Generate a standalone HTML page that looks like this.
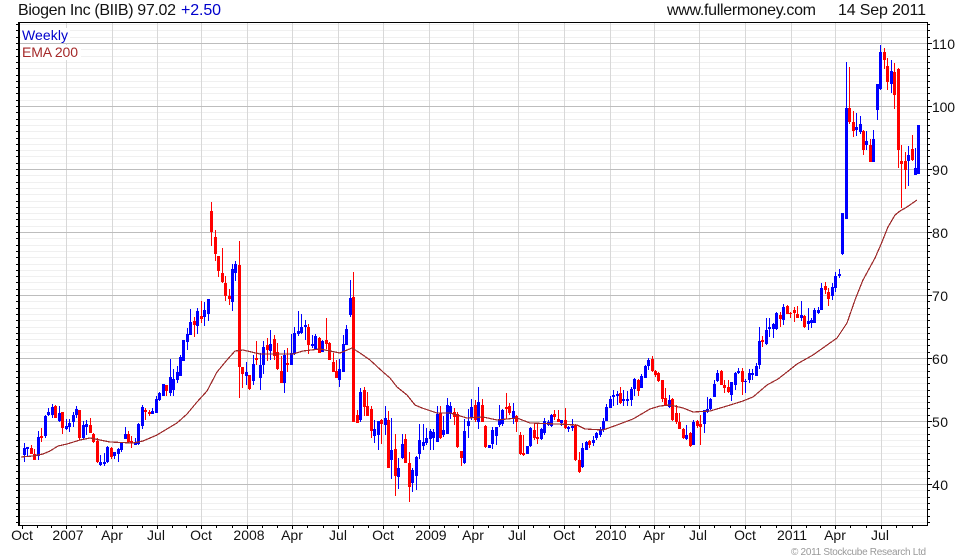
<!DOCTYPE html>
<html><head><meta charset="utf-8"><title>Biogen Inc (BIIB)</title>
<style>html,body{margin:0;padding:0;background:#fff;width:980px;height:560px;overflow:hidden}svg{display:block}text{font-family:"Liberation Sans",Arial,sans-serif}</style></head>
<body>
<svg width="980" height="560" viewBox="0 0 980 560" xmlns="http://www.w3.org/2000/svg">
<defs>
<clipPath id="c"><rect x="0" y="23" width="980" height="503"/></clipPath>
<g id="mi"><path d="M20 6.5H927M20 13.5H927M20 19.5H927M20 25.5H927M20 32.5H927M20 38.5H927M20 44.5H927M20 50.5H927M20 57.5H927" stroke="#f0f0f0" fill="none"/></g>
<g id="ma"><path d="M20 .5H927" stroke="#bdbdbd" fill="none"/></g>
<g id="tk"><path d="M16 .5H18M16 6.5H18M16 13.5H18M16 19.5H18M16 25.5H18M16 32.5H18M16 38.5H18M16 44.5H18M16 50.5H18M16 57.5H18M928 .5H932M928 6.5H930M928 13.5H930M928 19.5H930M928 25.5H930M928 32.5H930M928 38.5H930M928 44.5H930M928 50.5H930M928 57.5H930" stroke="#000" fill="none"/></g>
</defs>
<g clip-path="url(#c)">
<use href="#mi" y="-20"/><use href="#mi" y="43"/><use href="#mi" y="106"/><use href="#mi" y="169"/><use href="#mi" y="232"/><use href="#mi" y="295"/><use href="#mi" y="358"/><use href="#mi" y="421"/><use href="#mi" y="484"/>
</g>
<path d="M66.5 23V525M112.5 23V525M157.5 23V525M201.5 23V525M247.5 23V525M292.5 23V525M338.5 23V525M383.5 23V525M429.5 23V525M473.5 23V525M518.5 23V525M564.5 23V525M610.5 23V525M654.5 23V525M699.5 23V525M745.5 23V525M791.5 23V525M835.5 23V525M881.5 23V525" stroke="#d8d8d8" stroke-width="1" fill="none"/>
<use href="#ma" y="43"/><use href="#ma" y="106"/><use href="#ma" y="169"/><use href="#ma" y="232"/><use href="#ma" y="295"/><use href="#ma" y="358"/><use href="#ma" y="421"/><use href="#ma" y="484"/>
<g clip-path="url(#c)">
<use href="#tk" y="-20"/><use href="#tk" y="43"/><use href="#tk" y="106"/><use href="#tk" y="169"/><use href="#tk" y="232"/><use href="#tk" y="295"/><use href="#tk" y="358"/><use href="#tk" y="421"/><use href="#tk" y="484"/>
</g>
<!-- blue wicks -->
<path fill="none" stroke="#0000ff" stroke-width="1" d="M24.5 443V462M27.5 447V456M38.5 431V460M45.5 415V438M48.5 408V416M52.5 404V418M59.5 406V422M66.5 419V430M69.5 419V432M73.5 412V427M76.5 406V418M83.5 421V439M86.5 420V435M100.5 455V466M104.5 453V466M107.5 446V463M114.5 452V459M118.5 448V462M121.5 442V452M125.5 427V439M135.5 438V445M138.5 423V445M142.5 405V429M152.5 408V414M156.5 396V413M159.5 392V401M163.5 384V396M170.5 359V396M173.5 369V396M177.5 366V383M180.5 355V376M183.5 340V361M187.5 328V350M190.5 309V335M197.5 308V334M204.5 302V326M208.5 299V321M232.5 264V311M235.5 261V281M246.5 362V385M253.5 355V385M260.5 353V390M263.5 341V374M270.5 330V360M284.5 350V393M291.5 334V365M294.5 327V355M298.5 311V336M301.5 314V334M305.5 320V340M312.5 335V348M315.5 334V350M322.5 340V352M339.5 359V387M343.5 335V372M346.5 325V345M350.5 280V317M360.5 388V422M374.5 420V443M378.5 421V450M385.5 406V435M391.5 418V479M398.5 458V489M402.5 434V459M412.5 468V492M416.5 456V490M419.5 424V459M423.5 424V450M426.5 428V445M430.5 429V450M433.5 429V450M437.5 406V442M443.5 416V437M447.5 398V434M450.5 402V419M464.5 419V464M468.5 409V438M471.5 399V420M478.5 387V429M489.5 445V448M492.5 427V449M496.5 427V445M499.5 405V427M502.5 409V426M513.5 403V424M527.5 446V454M530.5 427V447M541.5 428V440M544.5 418V435M548.5 420V426M551.5 414V427M561.5 420V426M568.5 426V432M572.5 419V431M582.5 443V468M586.5 441V450M593.5 436V446M596.5 432V440M600.5 427V437M603.5 418V432M606.5 404V421M610.5 396V408M613.5 390V406M617.5 391V405M623.5 390V406M627.5 391V406M631.5 387V406M634.5 378V396M641.5 374V388M645.5 365V378M648.5 358V370M669.5 395V408M686.5 425V440M693.5 420V445M704.5 410V433M707.5 397V413M710.5 398V410M714.5 380V397M717.5 370V382M731.5 382V401M735.5 372V390M738.5 368V374M745.5 379V393M749.5 369V383M752.5 369V380M756.5 363V376M759.5 327V369M766.5 318V345M769.5 318V337M773.5 323V338M776.5 312V330M783.5 304V325M801.5 301V321M808.5 308V330M811.5 318V328M814.5 308V323M818.5 307V314M821.5 283V310M832.5 283V300M835.5 272V292M839.5 269V278M842.5 213V255M846.5 62V219M856.5 113V136M860.5 116V134M866.5 131V150M873.5 130V162M877.5 84V120M880.5 45V90M891.5 60V93M908.5 146V186M915.5 148V175M918.5 125V174"/>
<!-- blue bodies -->
<path fill="none" stroke="#0000ff" stroke-width="3" d="M24.5 448V455M27.5 447V449M38.5 437V456M45.5 416V436M48.5 412V415M52.5 407V415M59.5 413V421M66.5 426V429M69.5 423V427M73.5 415V422M76.5 409V415M83.5 425V438M86.5 424V427M100.5 462V465M104.5 462V464M107.5 447V462M114.5 452V456M118.5 449V454M121.5 442V450M125.5 434V439M135.5 443V445M138.5 424V444M142.5 407V426M152.5 411V414M156.5 399V413M159.5 393V400M163.5 384V396M170.5 377V393M173.5 379V390M177.5 372V380M180.5 357V376M183.5 340V361M187.5 334V342M190.5 322V335M197.5 311V326M204.5 310V317M208.5 299V314M232.5 269V302M235.5 264V273M246.5 372V376M253.5 364V381M260.5 365V378M263.5 347V365M270.5 344V351M284.5 355V383M291.5 353V365M294.5 333V354M298.5 331V334M301.5 327V333M305.5 325V327M312.5 344V346M315.5 336V350M322.5 341V352M339.5 369V380M343.5 344V372M346.5 329V345M350.5 298V315M360.5 392V420M374.5 429V436M378.5 421V435M385.5 418V425M391.5 450V460M398.5 468V477M402.5 444V458M412.5 470V483M416.5 457V476M419.5 440V454M423.5 442V446M426.5 438V443M430.5 431V439M433.5 432V438M437.5 414V442M443.5 430V435M447.5 405V434M450.5 406V414M464.5 431V463M468.5 421V426M471.5 407V418M478.5 402V422M489.5 445V448M492.5 430V444M496.5 427V436M499.5 419V425M502.5 410V424M513.5 411V418M527.5 446V454M530.5 428V446M541.5 429V439M544.5 421V433M548.5 422V425M551.5 415V426M561.5 420V423M568.5 427V429M572.5 426V428M582.5 448V467M586.5 442V450M593.5 440V443M596.5 433V438M600.5 429V435M603.5 421V430M606.5 407V421M610.5 399V408M613.5 395V397M617.5 394V396M623.5 399V401M627.5 399V401M631.5 389V400M634.5 379V389M641.5 376V388M645.5 366V378M648.5 360V366M669.5 400V407M686.5 435V439M693.5 422V445M704.5 410V424M707.5 409V412M710.5 399V409M714.5 384V397M717.5 373V381M731.5 382V395M735.5 373V385M738.5 371V373M745.5 381V382M749.5 373V380M752.5 373V375M756.5 366V376M759.5 341V365M766.5 330V344M769.5 327V329M773.5 324V329M776.5 313V329M783.5 307V320M801.5 315V318M808.5 321V324M811.5 320V323M814.5 310V323M818.5 310V313M821.5 288V310M832.5 287V296M835.5 276V288M839.5 274V276M842.5 213V254M846.5 108V219M856.5 127V130M860.5 124V132M866.5 141V145M873.5 139V162M877.5 84V110M880.5 52V89M891.5 71V84M908.5 155V161M915.5 168V175M918.5 125V174"/>
<!-- red wicks -->
<path fill="none" stroke="#ff0000" stroke-width="1" d="M31.5 445V454M34.5 449V460M41.5 428V442M55.5 405V418M62.5 412V434M79.5 410V440M90.5 418V433M93.5 433V443M97.5 438V463M111.5 447V459M128.5 431V442M131.5 436V448M145.5 408V420M149.5 410V416M166.5 385V396M194.5 317V337M201.5 301V323M211.5 202V246M215.5 230V261M218.5 256V277M222.5 248V283M225.5 276V301M229.5 289V305M239.5 241V398M242.5 367V388M249.5 375V390M256.5 341V365M267.5 338V361M274.5 335V360M277.5 343V370M281.5 356V383M287.5 348V372M308.5 324V354M319.5 337V353M326.5 318V349M329.5 342V360M333.5 353V372M336.5 360V378M353.5 272V422M357.5 410V423M364.5 387V416M367.5 392V416M371.5 406V438M381.5 419V444M388.5 411V468M395.5 434V496M405.5 434V463M409.5 452V502M440.5 406V439M454.5 408V425M457.5 412V448M461.5 451V466M475.5 400V422M482.5 399V422M485.5 425V448M506.5 393V419M509.5 403V415M516.5 415V432M520.5 432V455M523.5 435V456M534.5 423V440M537.5 423V444M554.5 410V420M558.5 410V422M565.5 408V429M575.5 424V461M579.5 452V473M589.5 440V448M620.5 387V404M638.5 379V396M652.5 356V372M655.5 370V377M658.5 372V382M662.5 380V402M665.5 388V406M672.5 398V421M676.5 405V424M679.5 413V429M683.5 428V439M690.5 432V447M697.5 420V428M700.5 415V445M721.5 370V385M724.5 380V393M728.5 380V393M742.5 368V395M762.5 336V347M780.5 312V327M787.5 305V314M790.5 312V318M794.5 307V322M797.5 306V318M804.5 315V328M825.5 282V294M828.5 288V306M849.5 67V124M853.5 111V137M863.5 130V155M870.5 139V162M884.5 48V69M887.5 58V90M894.5 63V109M898.5 68V168M901.5 145V208M905.5 152V189M912.5 135V161"/>
<!-- red bodies -->
<path fill="none" stroke="#ff0000" stroke-width="3" d="M31.5 448V454M34.5 454V460M41.5 436V438M55.5 406V418M62.5 412V428M79.5 410V438M90.5 425V433M93.5 434V442M97.5 441V462M111.5 448V457M128.5 434V442M131.5 441V443M145.5 410V412M149.5 412V414M166.5 385V391M194.5 321V325M201.5 316V319M211.5 211V232M215.5 237V254M218.5 256V271M222.5 273V282M225.5 283V296M229.5 296V299M239.5 265V367M242.5 367V374M249.5 375V389M256.5 358V360M267.5 345V350M274.5 339V356M277.5 352V369M281.5 371V383M287.5 363V365M308.5 327V345M319.5 338V353M326.5 340V344M329.5 343V360M333.5 362V372M336.5 371V378M353.5 297V422M357.5 415V423M364.5 390V407M367.5 406V416M371.5 409V431M381.5 420V424M388.5 420V468M395.5 449V476M405.5 439V463M409.5 463V487M440.5 413V438M454.5 412V417M457.5 414V447M461.5 451V458M475.5 405V420M482.5 405V422M485.5 426V447M506.5 407V409M509.5 406V413M516.5 416V422M520.5 435V454M523.5 453V455M534.5 430V438M537.5 437V439M554.5 414V417M558.5 419V422M565.5 420V428M575.5 425V460M579.5 460V472M589.5 441V445M620.5 393V403M638.5 380V391M652.5 359V371M655.5 371V375M658.5 373V381M662.5 380V399M665.5 398V405M672.5 399V420M676.5 413V422M679.5 422V429M683.5 429V438M690.5 433V446M697.5 421V426M700.5 424V427M721.5 371V385M724.5 385V388M728.5 387V392M742.5 371V382M762.5 340V342M780.5 315V319M787.5 306V314M790.5 313V314M794.5 310V313M797.5 314V318M804.5 316V327M825.5 286V290M828.5 292V299M849.5 108V122M853.5 122V131M863.5 131V150M870.5 145V162M884.5 52V60M887.5 66V82M894.5 72V95M898.5 69V150M901.5 161V164M905.5 161V170M912.5 149V160"/>
<!-- EMA -->
<polyline fill="none" stroke="#9c2a2a" stroke-width="1.2" shape-rendering="crispEdges" points="21,457 33,456 43,454 50,451 58,446 67,444 80,440 90,438 100,440 110,442 133,443 143,441 157,435 167,429 177,423 187,414 197,402 207,391 217,372 227,360 235,351 243,350 260,354 280,354 293,354 303,351 320,349 340,353 352,348 360,353 370,360 383,372 390,378 397,387 407,395 415,405 422,408 437,413 450,413 467,418 483,417 497,420 517,418 530,423 557,424 577,425 585,429 603,430 617,425 633,419 650,409 660,406 670,405 683,408 693,412 710,411 727,406 743,401 753,397 767,385 778,379 787,372 797,364 813,355 837,338 847,323 855,300 863,280 875,258 882,242 888,227 895,215 900,211 907,207 917,200"/>
<!-- frame -->
<path d="M18 22.5H928M927.5 22V526M18 525.5H928" stroke="#000" fill="none"/>
<rect x="18" y="22" width="2" height="504" fill="#000"/>
<path d="M22.5 526V529M66.5 526V529M112.5 526V529M157.5 526V529M201.5 526V529M247.5 526V529M292.5 526V529M338.5 526V529M383.5 526V529M429.5 526V529M473.5 526V529M518.5 526V529M564.5 526V529M610.5 526V529M654.5 526V529M699.5 526V529M745.5 526V529M791.5 526V529M835.5 526V529M881.5 526V529M37.5 526V528M51.5 526V528M81.5 526V528M96.5 526V528M127.5 526V528M142.5 526V528M172.5 526V528M186.5 526V528M216.5 526V528M232.5 526V528M262.5 526V528M277.5 526V528M307.5 526V528M323.5 526V528M353.5 526V528M368.5 526V528M398.5 526V528M414.5 526V528M444.5 526V528M458.5 526V528M488.5 526V528M503.5 526V528M533.5 526V528M549.5 526V528M579.5 526V528M595.5 526V528M625.5 526V528M639.5 526V528M669.5 526V528M684.5 526V528M714.5 526V528M730.5 526V528M760.5 526V528M776.5 526V528M806.5 526V528M820.5 526V528M850.5 526V528M866.5 526V528M896.5 526V528M912.5 526V528" stroke="#000" fill="none"/>
<!-- labels -->
<rect x="21" y="28" width="49" height="15" fill="#fff"/>
<rect x="21" y="45" width="60" height="15" fill="#fff"/>
<text x="22" y="40" font-size="14" fill="#0000cc" textLength="46">Weekly</text>
<text x="22" y="57" font-size="14" fill="#a52a2a" textLength="56">EMA 200</text>
<text x="18" y="15" font-size="16" fill="#111" textLength="158">Biogen Inc (BIIB) 97.02</text>
<text x="181" y="15" font-size="16" fill="#0000cc" textLength="40">+2.50</text>
<text x="667" y="15" font-size="16" fill="#111" textLength="149">www.fullermoney.com</text>
<text x="838" y="15" font-size="16" fill="#111" textLength="88">14 Sep 2011</text>
<g font-size="14" fill="#111">
<text x="932" y="49" textLength="23">110</text>
<text x="932" y="112" textLength="23">100</text>
<text x="932" y="175" textLength="16">90</text>
<text x="932" y="238" textLength="16">80</text>
<text x="932" y="301" textLength="16">70</text>
<text x="932" y="364" textLength="16">60</text>
<text x="932" y="427" textLength="16">50</text>
<text x="932" y="490" textLength="16">40</text>
</g>
<g font-size="14" fill="#111" text-anchor="middle">
<text x="22" y="540">Oct</text><text x="68" y="540">2007</text><text x="112" y="540">Apr</text><text x="156" y="540">Jul</text><text x="201" y="540">Oct</text><text x="249" y="540">2008</text><text x="292" y="540">Apr</text><text x="338" y="540">Jul</text><text x="383" y="540">Oct</text><text x="431" y="540">2009</text><text x="473" y="540">Apr</text><text x="517" y="540">Jul</text><text x="564" y="540">Oct</text><text x="611" y="540">2010</text><text x="654" y="540">Apr</text><text x="698" y="540">Jul</text><text x="745" y="540">Oct</text><text x="792" y="540">2011</text><text x="835" y="540">Apr</text><text x="880" y="540">Jul</text>
</g>
<text x="791" y="555" font-size="10" fill="#999" textLength="135">© 2011 Stockcube Research Ltd</text>
</svg>
</body></html>
